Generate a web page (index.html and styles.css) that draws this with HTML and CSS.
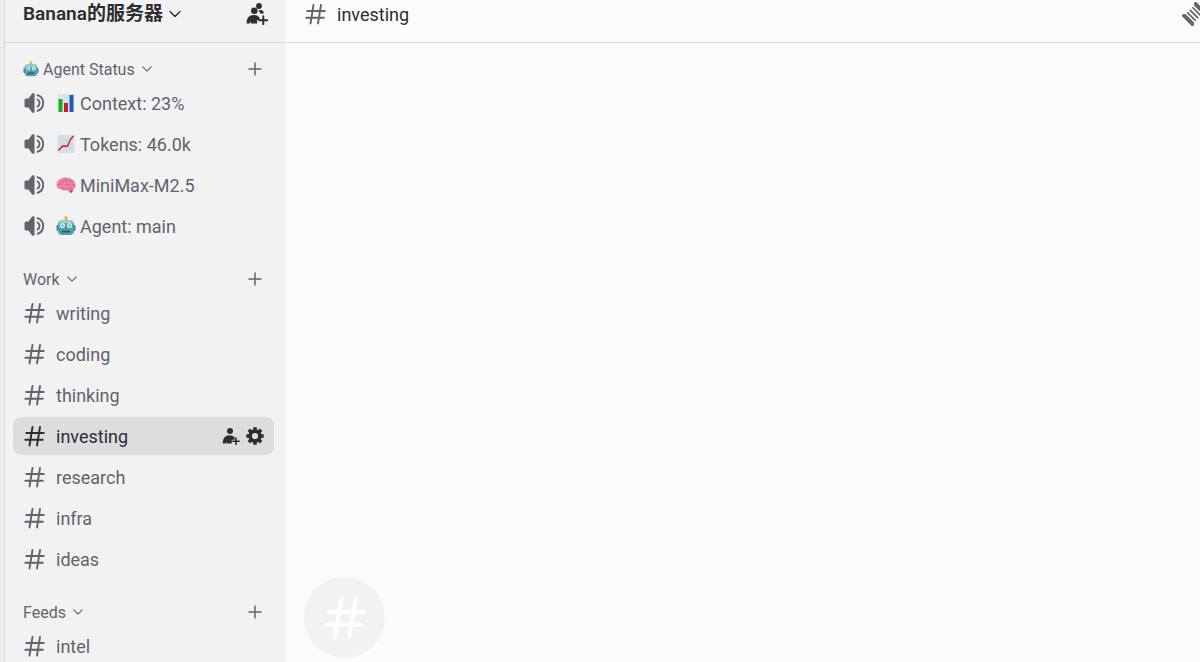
FILE: index.html
```
<!DOCTYPE html>
<html lang="zh-CN">
<head>
  <meta charset="UTF-8">
  <meta name="viewport" content="width=device-width, initial-scale=1.0">
  <title>investing | Banana的服务器</title>
  <link rel="stylesheet" href="styles.css">
</head>
<body>
  <!-- shared icons -->
  <svg class="sprite" aria-hidden="true">
    <symbol id="hash" viewBox="0 0 24 24">
      <path d="M10.500 3 7.500 21.500M18 3l-3 18.500M4.300 9h17.500M3.300 15.800h17.500" fill="none" stroke="currentColor" stroke-width="1.900" stroke-linecap="round"/>
    </symbol>
    <symbol id="hash-large" viewBox="0 0 48 48">
      <path d="M20.300 5 14 42.500M34.600 5l-6.200 37.500M8 17.800h34.500M5.500 30.500H40" fill="none" stroke="currentColor" stroke-width="4.200" stroke-linecap="round"/>
    </symbol>
    <symbol id="speaker" viewBox="0 0 24 24">
      <path d="M12.500 3.200v17.600a1 1 0 0 1-1 1h-.6a1 1 0 0 1-.8-.4L6.500 16.500H4A1.500 1.500 0 0 1 2.500 15V9A1.500 1.500 0 0 1 4 7.500h2.500l3.600-4.900a1 1 0 0 1 .8-.4h.6a1 1 0 0 1 1 1z" fill="currentColor"/>
      <path d="M15.500 4.200a8.200 8.200 0 0 1 0 15.600M15.500 8.500a4 4 0 0 1 0 7" fill="none" stroke="currentColor" stroke-width="1.900" stroke-linecap="round"/>
    </symbol>
    <symbol id="chevron" viewBox="0 0 12 12">
      <path d="m1 3.500 5 5 5-5" fill="none" stroke="currentColor" stroke-width="1.400" stroke-linecap="round" stroke-linejoin="round"/>
    </symbol>
    <symbol id="plus" viewBox="0 0 14 14">
      <path d="M7 1v12M1 7h12" fill="none" stroke="currentColor" stroke-width="1.500" stroke-linecap="round"/>
    </symbol>
    <symbol id="invite" viewBox="0 0 18 18">
      <circle cx="8" cy="4" r="3" fill="currentColor"/>
      <path d="M.8 16.500C.8 11 3.300 8.200 7.300 8.200c3 0 4.600 1 5.400 2.600v2H9.800v3.700H4.500l.3-2-1.200 2z" fill="currentColor"/>
      <path d="M14 11v6.400M10.800 14.200h6.400" stroke="currentColor" stroke-width="1.600" stroke-linecap="round"/>
    </symbol>
    <symbol id="invite-group" viewBox="0 0 22 22">
      <circle cx="13" cy="3" r="2.900" fill="currentColor"/>
      <path d="M12.800 7.200c3.300-.4 4.900.4 5 3.400h-3.600c-.2-1.300-.7-2.100-1.400-2.700z" fill="currentColor"/>
      <circle cx="8.300" cy="7.700" r="3.300" fill="currentColor"/>
      <path d="M.6 20.500c0-5.800 2.600-8.600 6.900-8.600 3 0 5 1 6 2.900v2.100h-2.400v3.600H4.800l.3-2.400-1.500 2.400z" fill="currentColor"/>
      <path d="M17.300 13.200v8M13.300 17.200h8" stroke="currentColor" stroke-width="1.900" stroke-linecap="round"/>
    </symbol>
    <symbol id="gear" viewBox="0 0 18 18">
      <circle cx="9" cy="9" r="4.900" fill="none" stroke="currentColor" stroke-width="3.600"/>
      <path d="M9 .3v3M9 14.700v3M.3 9h3M14.700 9h3M2.850 2.850l2.100 2.100M13.050 13.050l2.100 2.100M2.850 15.150l2.100-2.100M13.050 4.950l2.100-2.100" stroke="currentColor" stroke-width="3.600"/>
    </symbol>
    <symbol id="robot" viewBox="0 0 20 20">
      <path d="M10 2v3" stroke="#8b8f94" stroke-width="1.500"/>
      <circle cx="10" cy="2" r="1.700" fill="#f2a93b"/>
      <rect x=".6" y="9" width="3" height="6" rx="1.200" fill="#3b7f8a"/>
      <rect x="16.400" y="9" width="3" height="6" rx="1.200" fill="#3b7f8a"/>
      <path d="M5 4.500h10c2 0 3 1.500 3 4v6c0 3-1.500 4.500-4 4.500H6c-2.500 0-4-1.500-4-4.500v-6c0-2.500 1-4 3-4z" fill="#53a3ab"/>
      <path d="M5 4.500h10c1.500 0 2.500 1 2.900 2.800H2.100C2.500 5.500 3.500 4.500 5 4.500z" fill="#a5c8cb"/>
      <circle cx="6.500" cy="9.500" r="2.500" fill="#d8f6f8"/>
      <circle cx="13.500" cy="9.500" r="2.500" fill="#d8f6f8"/>
      <circle cx="6.500" cy="9.500" r="1.100" fill="#2fa3b5"/>
      <circle cx="13.500" cy="9.500" r="1.100" fill="#2fa3b5"/>
      <path d="m10 10.500 1.400 2.300H8.600z" fill="#d4525b"/>
      <rect x="5.500" y="14.500" width="9" height="2" rx="1" fill="#2d626b"/>
    </symbol>
    <symbol id="bars" viewBox="0 0 20 20">
      <rect x="1.500" y="1" width="17" height="18" fill="#d6e4ed"/>
      <rect x="2.500" y="6" width="4" height="13" fill="#21a52d"/>
      <rect x="8" y="10" width="4" height="9" fill="#c51c26"/>
      <rect x="13.500" y="2" width="4" height="17" fill="#1e58bd"/>
    </symbol>
    <symbol id="trend" viewBox="0 0 20 20">
      <rect x="1.500" y="1" width="17" height="18" fill="#d6e0e6"/>
      <path d="M1.500 5.500h17M1.500 10h17M1.500 14.500h17M6 1v18M10.500 1v18M15 1v18" stroke="#c6d3da" stroke-width=".5"/>
      <path d="m2.500 16.500 4-4.500 5 .3 3-7L17.500 2" fill="none" stroke="#c6213c" stroke-width="1.400" stroke-linejoin="round"/>
    </symbol>
    <symbol id="brain" viewBox="0 0 20 20">
      <path d="M12 14.500c1 1 1.500 3 2.800 3.500 1.600 0 2.400-2.400 2.400-4z" fill="#b94a76"/>
      <path d="M.5 10.500C.3 6 4 2.800 9 2.600c5.500-.2 10 2.600 10.500 6.800.4 3.200-1 5.400-3.700 5.400-1.500 1.500-4.500 1.600-6 .2-1.600 1-4 .6-4.800-1C2.800 14.200.7 13 .5 10.500z" fill="#ed87a9"/>
      <path d="M3 10c1-1.800 2.500-1.800 3.800-.5M5 6.200c1.500-1 2.800-.2 3 1.200M9.500 3.500c-.8 2 .6 3.200 2.500 3M14 4.500c-.6 1.500.4 3 2.300 2.600M10 9.500c1.500-1 3-.3 3.300 1.200M15.500 10c1.200-.8 2.300-.5 3 .5M5.500 13.500c1-1.300 3-1.600 4.500.8M12 13.600c1-.8 2.500-.8 3.700.5" fill="none" stroke="#c9547f" stroke-width=".9" stroke-linecap="round"/>
    </symbol>
    <symbol id="threads" viewBox="0 0 24 24">
      <g fill="currentColor" transform="rotate(45 12 12)">
        <path d="M5.500 2h13a1.400 1.400 0 0 1 1.100 2.200L18 6H6L4.400 4.200A1.400 1.400 0 0 1 5.500 2z"/>
        <rect x="6" y="7.500" width="12" height="1.700" rx=".8"/>
        <rect x="6" y="11.200" width="12" height="1.700" rx=".8"/>
        <rect x="6" y="14.800" width="12" height="1.700" rx=".8"/>
        <path d="M6 18h12l1.600 1.800a1.400 1.400 0 0 1-1.100 2.200h-13a1.400 1.400 0 0 1-1.100-2.200z"/>
      </g>
    </symbol>
  </svg>

  <div class="app">
    <aside class="sidebar">
      <header class="server-header">
        <button class="server-name">Banana的服务器 <svg class="icon-12"><use href="#chevron"/></svg></button>
        <button class="server-invite" aria-label="邀请"><svg class="icon-22"><use href="#invite-group"/></svg></button>
      </header>

      <nav class="channels">
        <section class="category">
          <div class="category-header">
            <button class="category-name"><svg class="icon-16"><use href="#robot"/></svg><span>Agent Status</span> <svg class="icon-10"><use href="#chevron"/></svg></button>
            <button class="add" aria-label="创建频道"><svg class="icon-14"><use href="#plus"/></svg></button>
          </div>
          <ul>
            <li><a class="channel" href="#"><svg class="icon-24"><use href="#speaker"/></svg><svg class="emoji"><use href="#bars"/></svg><span>Context: 23%</span></a></li>
            <li><a class="channel" href="#"><svg class="icon-24"><use href="#speaker"/></svg><svg class="emoji"><use href="#trend"/></svg><span>Tokens: 46.0k</span></a></li>
            <li><a class="channel" href="#"><svg class="icon-24"><use href="#speaker"/></svg><svg class="emoji"><use href="#brain"/></svg><span>MiniMax-M2.5</span></a></li>
            <li><a class="channel" href="#"><svg class="icon-24"><use href="#speaker"/></svg><svg class="emoji"><use href="#robot"/></svg><span>Agent: main</span></a></li>
          </ul>
        </section>

        <section class="category">
          <div class="category-header">
            <button class="category-name">Work <svg class="icon-10"><use href="#chevron"/></svg></button>
            <button class="add" aria-label="创建频道"><svg class="icon-14"><use href="#plus"/></svg></button>
          </div>
          <ul>
            <li><a class="channel" href="#"><svg class="icon-24"><use href="#hash"/></svg><span>writing</span></a></li>
            <li><a class="channel" href="#"><svg class="icon-24"><use href="#hash"/></svg><span>coding</span></a></li>
            <li><a class="channel" href="#"><svg class="icon-24"><use href="#hash"/></svg><span>thinking</span></a></li>
            <li class="selected">
              <a class="channel" href="#"><svg class="icon-24"><use href="#hash"/></svg><span>investing</span></a>
              <button aria-label="创建邀请"><svg class="icon-18"><use href="#invite"/></svg></button>
              <button aria-label="编辑频道"><svg class="icon-18"><use href="#gear"/></svg></button>
            </li>
            <li><a class="channel" href="#"><svg class="icon-24"><use href="#hash"/></svg><span>research</span></a></li>
            <li><a class="channel" href="#"><svg class="icon-24"><use href="#hash"/></svg><span>infra</span></a></li>
            <li><a class="channel" href="#"><svg class="icon-24"><use href="#hash"/></svg><span>ideas</span></a></li>
          </ul>
        </section>

        <section class="category">
          <div class="category-header">
            <button class="category-name">Feeds <svg class="icon-10"><use href="#chevron"/></svg></button>
            <button class="add" aria-label="创建频道"><svg class="icon-14"><use href="#plus"/></svg></button>
          </div>
          <ul>
            <li><a class="channel" href="#"><svg class="icon-24"><use href="#hash"/></svg><span>intel</span></a></li>
          </ul>
        </section>
      </nav>
    </aside>

    <main class="chat">
      <header class="chat-header">
        <svg class="icon-24"><use href="#hash"/></svg>
        <h1>investing</h1>
        <button class="threads" aria-label="子区"><svg class="icon-24"><use href="#threads"/></svg></button>
      </header>
      <div class="messages">
        <div class="welcome-icon"><svg><use href="#hash-large"/></svg></div>
      </div>
    </main>
  </div>
</body>
</html>
```

FILE: styles.css
```
* {
  box-sizing: border-box;
}
body {
  margin: 0;
  font-family: Roboto, "Noto Sans CJK SC", sans-serif;
  font-size: 18px;
  font-weight: 450;
  color: #62636c;
  background: #fbfbfb;
}
button {
  display: flex;
  align-items: center;
  padding: 0;
  border: 0;
  background: none;
  font: inherit;
  color: inherit;
  cursor: pointer;
}
ul {
  list-style: none;
  margin: 0;
  padding: 0;
  display: grid;
  gap: 3px;
}
svg {
  display: block;
  flex-shrink: 0;
}
.sprite {
  display: none;
}
.icon-10 { width: 10px; height: 10px; }
.icon-12 { width: 12px; height: 12px; }
.icon-14 { width: 14px; height: 14px; }
.icon-16 { width: 16px; height: 16px; }
.icon-18 { width: 18px; height: 18px; }
.icon-22 { width: 22px; height: 22px; }
.icon-24 { width: 24px; height: 24px; }
.emoji { width: 20px; height: 20px; margin-right: -6px; }

.app {
  display: flex;
  height: 100vh;
  overflow: hidden;
}

/* sidebar */
.sidebar {
  width: 285px;
  flex-shrink: 0;
  background: linear-gradient(to right, #ececed 4px, #d9d9db 4px, #d9d9db 5px, #f2f2f3 5px);
  padding-left: 5px;
}
.server-header {
  display: flex;
  justify-content: space-between;
  height: 43px;
  padding: 0 17px 14px 18px;
  border-bottom: 1px solid #dadadc;
  color: #2c2d32;
}
.server-name {
  gap: 6px;
  font-size: 19px;
  font-weight: 600;
  line-height: 24px;
}
.channels {
  padding: 11px 11px 0 8px;
}
.category {
  margin-bottom: 19px;
}
.category-header {
  display: flex;
  justify-content: space-between;
  height: 30px;
  padding: 0 12px 0 10px;
}
.category-name {
  gap: 7px;
  font-size: 16px;
}
.category-name .icon-16 {
  margin-right: -3px;
}
li {
  display: flex;
  align-items: center;
  height: 38px;
  border-radius: 8px;
}
.channel {
  display: flex;
  flex: 1;
  align-items: center;
  gap: 10px;
  padding-left: 9px;
  color: inherit;
  text-decoration: none;
}
.selected {
  gap: 6px;
  padding-right: 10px;
  background: #dddde0;
  color: #2c2d32;
}

/* chat */
.chat {
  display: flex;
  flex: 1;
  flex-direction: column;
  min-width: 0;
}
.chat-header {
  display: flex;
  align-items: center;
  gap: 10px;
  height: 43px;
  padding: 0 0 14px 18px;
  border-bottom: 1px solid #dadadc;
  overflow: hidden;
}
.chat-header h1 {
  margin: 0;
  font-size: 18px;
  font-weight: 450;
  color: #2c2d32;
}
.threads {
  margin: 0 -6px 0 auto;
}
.messages {
  display: flex;
  flex: 1;
  align-items: flex-end;
  padding: 0 19px 4px;
}
.welcome-icon {
  display: grid;
  place-items: center;
  width: 81px;
  height: 81px;
  border-radius: 50%;
  background: #f2f2f3;
  color: #fff;
}
.welcome-icon svg {
  width: 48px;
  height: 48px;
}
```
